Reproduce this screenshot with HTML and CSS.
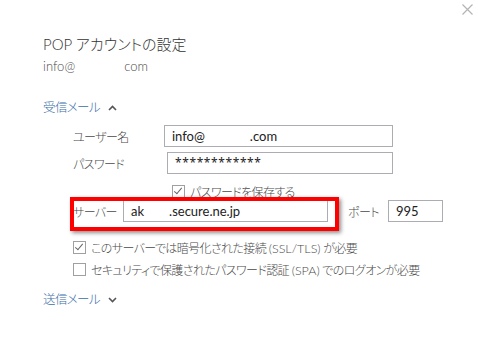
FILE: index.html
```html
<!DOCTYPE html>
<html>
<head>
    <title>POP アカウントの設定</title>
    <link rel="stylesheet" href="styles.css">
</head>
<body>
    <div class="dialog">
        <button class="close-button" aria-label="閉じる">
            <svg width="11" height="11" viewBox="0 0 11 11"><path d="M0.5 0.5 L10.5 10.5 M10.5 0.5 L0.5 10.5" stroke="#b4b4b4" stroke-width="1.2" fill="none"/></svg>
        </button>

        <h1 class="title">POP アカウントの設定</h1>
        <p class="account">info@<span class="masked-short"></span>com</p>

        <div class="section-head">
            受信メール
            <svg class="chevron" width="9" height="6" viewBox="0 0 9 6"><path d="M1 5 L4.5 1.5 L8 5" stroke="#555" stroke-width="1.6" fill="none"/></svg>
        </div>

        <div class="fields">
            <div class="row">
                <span class="label">ユーザー名</span>
                <div class="input input-user">info@<span class="masked"></span>.com</div>
            </div>
            <div class="row">
                <span class="label">パスワード</span>
                <div class="input input-pass">************</div>
            </div>
            <div class="check-row check-save">
                <span class="checkbox checked"></span>
                <span>パスワードを保存する</span>
            </div>
            <div class="row server-row">
                <span class="label label-server">サーバー</span>
                <div class="input input-server">ak<span class="masked-server"></span>.secure.ne.jp</div>
                <span class="label-port">ポート</span>
                <div class="input input-port">995</div>
                <div class="highlight"></div>
            </div>
            <div class="check-row">
                <span class="checkbox checked"></span>
                <span>このサーバーでは暗号化された接続 <span class="en">(SSL/TLS)</span> が必要</span>
            </div>
            <div class="check-row">
                <span class="checkbox"></span>
                <span>セキュリティで保護されたパスワード認証 <span class="en">(SPA)</span> でのログオンが必要</span>
            </div>
        </div>

        <div class="section-head section-out">
            送信メール
            <svg class="chevron" width="9" height="6" viewBox="0 0 9 6"><path d="M1 1 L4.5 4.5 L8 1" stroke="#555" stroke-width="1.6" fill="none"/></svg>
        </div>
    </div>
</body>
</html>
```

FILE: styles.css
```css
body {
    margin: 0;
    background: #fff;
    font-family: Lato, "Noto Sans CJK JP", sans-serif;
    font-feature-settings: "palt";
    font-weight: 300;
    color: #4a4a4a;
    font-size: 12px;
    letter-spacing: -0.6px;
}
.dialog {
    position: relative;
    width: 478px;
    height: 341px;
    padding: 34px 0 0 43px;
    box-sizing: border-box;
}
.close-button {
    position: absolute;
    top: 4px;
    right: 5px;
    border: none;
    background: none;
    padding: 0;
    line-height: 0;
}
.title {
    margin: 0;
    font-size: 15px;
    font-weight: 300;
    letter-spacing: 0;
    color: #333;
    line-height: 20px;
}
.account {
    margin: 3px 0 0;
    line-height: 18px;
    font-size: 13px;
    letter-spacing: 0;
}
.masked-short {
    display: inline-block;
    width: 49px;
}
.section-head {
    margin-top: 24px;
    color: #3b6ea8;
    line-height: 18px;
    font-size: 12.5px;
    display: flex;
    align-items: center;
}
.chevron {
    margin-left: 8px;
}
.fields {
    margin: 8px 0 0 30px;
}
.row {
    display: flex;
    align-items: center;
    height: 22px;
    margin-bottom: 5px;
}
.label {
    width: 91px;
}
.input {
    height: 22px;
    box-sizing: border-box;
    border: 1px solid #abadb3;
    padding: 0 7px;
    line-height: 20px;
    color: #222;
    font-size: 13px;
    font-weight: 400;
    letter-spacing: 0;
    white-space: nowrap;
}
.input-user {
    width: 229px;
}
.input-pass {
    width: 226px;
    margin-left: 3px;
    font-family: "Noto Sans", sans-serif;
    font-size: 12px;
    letter-spacing: 0.6px;
}
.masked {
    display: inline-block;
    width: 45px;
}
.en {
    font-size: 12.5px;
    letter-spacing: 0;
}
.check-row {
    display: flex;
    align-items: center;
    height: 18px;
    margin-bottom: 4px;
}
.check-save {
    height: 14px;
    margin: 10px 0 2px 99px;
}
.checkbox {
    flex: none;
    width: 11px;
    height: 11px;
    border: 1px solid #a0a0a0;
    margin-right: 5px;
    position: relative;
}
.checkbox.checked::after {
    content: "";
    position: absolute;
    left: 3px;
    top: 0;
    width: 3px;
    height: 7px;
    border: solid #666;
    border-width: 0 1.5px 1.5px 0;
    transform: rotate(40deg);
}
.server-row {
    position: relative;
    margin: 0 0 16px;
}
.label-server {
    width: 50px;
}
.input-server {
    width: 205px;
}
.masked-server {
    display: inline-block;
    width: 25px;
}
.label-port {
    margin-left: 20px;
    width: 40px;
}
.input-port {
    width: 55px;
}
.highlight {
    position: absolute;
    left: -3px;
    top: -3px;
    width: 261px;
    height: 26px;
    border: 4px solid #f00;
    box-shadow: 2px 2px 4px rgba(0, 0, 0, 0.45);
}
.section-out {
    margin-top: 13px;
}
```
